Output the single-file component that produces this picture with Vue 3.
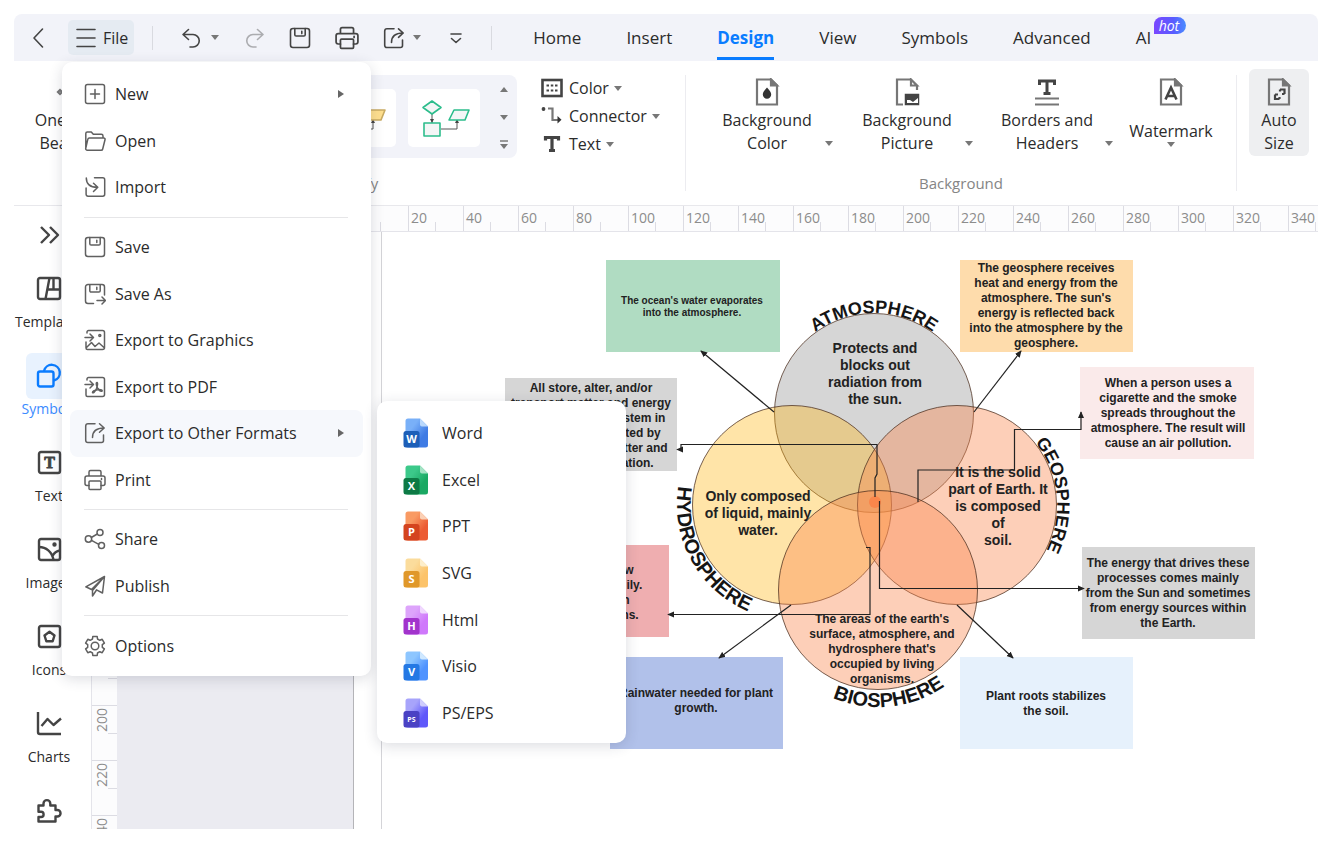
<script setup>
const polar = (cx, cy, r, deg) => {
  const a = (deg * Math.PI) / 180
  return `${(cx + r * Math.sin(a)).toFixed(1)} ${(cy - r * Math.cos(a)).toFixed(1)}`
}

const gearPath = () => {
  const pts = []
  for (let i = 0; i < 6; i++) {
    const a = i * 60
    pts.push(polar(11, 11, 7.4, a - 20), polar(11, 11, 9.8, a - 13), polar(11, 11, 9.8, a + 13), polar(11, 11, 7.4, a + 20))
  }
  return 'M' + pts.join('L') + 'Z'
}

const floppy = '<rect x="1.5" y="1.5" width="19" height="19" rx="2.5"/><path d="M5.8 1.5v6.2a1.3 1.3 0 0 0 1.3 1.3h7.8a1.3 1.3 0 0 0 1.3-1.3V1.5M12.8 4.2v2.4"/>'
const printer = '<path d="M5 7V3a1.5 1.5 0 0 1 1.500-1.500h9a1.500 1.500 0 0 1 1.500 1.500v4M5 16.500H3A2 2 0 0 1 1 14.500V9a2 2 0 0 1 2-2h16a2 2 0 0 1 2 2v5.500a2 2 0 0 1-2 2h-2M17.500 9.500v1"/><rect x="5" y="12" width="12" height="8.500" rx="1"/>'
const shareOut = '<path d="M11 1.800H4A2.300 2.300 0 0 0 1.700 4v14.200A2.300 2.300 0 0 0 4 20.500h13.500a2 2 0 0 0 2-2V13M8.500 15.500c0-6 4-9.500 11.500-9.500M15.500 1.800 20.200 6l-4.700 4.300"/>'

const icons = {
  back: '<path d="M14.500 2 6 11l8.500 9"/>',
  burger: '<path d="M2 2.500h18M2 11h18M2 19.500h18"/>',
  undo: '<path d="M7.500 2.500 2 7.500l5.500 5M2.500 7.500H12a6 6 0 0 1 0 12.500H9"/>',
  redo: '<path d="M14.500 2.500 20 7.500l-5.500 5M19.500 7.500H10A6 6 0 0 0 10 20h3"/>',
  floppy,
  printer,
  shareOut,
  more: '<path d="M6 7h10M6.500 11.500l4.500 4 4.500-4"/>',
  newDoc: '<rect x="1.500" y="1.500" width="19" height="19" rx="2"/><path d="M11 6.500v9M6.500 11h9"/>',
  folder: '<path d="M1.800 18V3.500A1.500 1.500 0 0 1 3.300 2h4l2 2.300h8a1.700 1.700 0 0 1 1.700 1.700v2M1.800 18 3.800 9.300A1.600 1.600 0 0 1 5.400 8h14.300a1.300 1.300 0 0 1 1.300 1.700l-2.300 9.300a1.600 1.600 0 0 1-1.600 1.300H3.500A1.700 1.700 0 0 1 1.800 18Z"/>',
  importIn: '<path d="M10.500 1.800h8.300a1.900 1.900 0 0 1 1.900 1.900v14.600a1.900 1.900 0 0 1-1.900 1.900H4a1.900 1.900 0 0 1-1.900-1.900V12M2.300 2c0 5.500 3.500 9.300 11 9.300M9.500 7.300l4.300 4-4.300 4.200"/>',
  saveAs: '<path d="M9.500 20.500H4A2.500 2.500 0 0 1 1.500 18V4A2.500 2.500 0 0 1 4 1.500h14A2.500 2.500 0 0 1 20.500 4v8M5.800 1.500v6.200A1.300 1.300 0 0 0 7.100 9h7.800a1.300 1.300 0 0 0 1.300-1.300V1.500M12.800 4.200v2.400M13 17.500h8M18 14l3.500 3.500L18 21"/>',
  graphics: '<path d="M3 4V3a1.500 1.500 0 0 1 1.500-1.500h14A2 2 0 0 1 20.500 3.500v15a2 2 0 0 1-2 2h-15a1.500 1.500 0 0 1-1.500-1.500v-6M1 8.500h8M6 5l3.500 3.500L6 12M2 19l5.500-5.500 3.500 4 4-3.500 5.500 5"/><circle cx="15.800" cy="6.500" r="1"/>',
  pdf: '<path d="M3 4V3a1.500 1.500 0 0 1 1.500-1.500h14A2 2 0 0 1 20.500 3.500v15a2 2 0 0 1-2 2h-15a1.500 1.500 0 0 1-1.500-1.500v-6M1 8.500h8M6 5l3.500 3.500L6 12M13 6.500c-1 0-1 2 .3 5 1 2.200 3 4 4.500 3.800 1.400-.8-.8-2-4-1.600-3 .4-5.500 1.500-5.300 2.800.8 1.200 2.800-1.200 4-4 1-2.500 1.500-6 .5-6Z"/>',
  share: '<circle cx="4.500" cy="11" r="3.200"/><circle cx="16" cy="4.500" r="3"/><circle cx="17.500" cy="17.500" r="3"/><path d="m7.300 9.500 6-3.500M7.500 12.300l7.300 4"/>',
  publish: '<path d="M20.500 1.500 1.800 11.800l5.700 2.700L20.500 1.500Zm0 0-2 16.500-6-3.200M20.500 1.500 8.500 15.500v5.500l4-6"/>',
  gear: `<path d="${gearPath()}"/><circle cx="11" cy="11" r="3.800"/>`,
}

const quickTools = [
  { name: 'Undo', icon: 'undo', caret: true },
  { name: 'Redo', icon: 'redo', disabled: true },
  { name: 'Save', icon: 'floppy' },
  { name: 'Print', icon: 'printer', wide: true },
  { name: 'Share', icon: 'shareOut', caret: true },
  { name: 'More', icon: 'more' },
]

const tabs = ['Home', 'Insert', 'Design', 'View', 'Symbols', 'Advanced', 'AI']

const fileMenu = [
  { label: 'New', icon: 'newDoc', sub: true },
  { label: 'Open', icon: 'folder' },
  { label: 'Import', icon: 'importIn' },
  null,
  { label: 'Save', icon: 'floppy' },
  { label: 'Save As', icon: 'saveAs' },
  { label: 'Export to Graphics', icon: 'graphics' },
  { label: 'Export to PDF', icon: 'pdf' },
  { label: 'Export to Other Formats', icon: 'shareOut', sub: true, open: true },
  { label: 'Print', icon: 'printer' },
  null,
  { label: 'Share', icon: 'share' },
  { label: 'Publish', icon: 'publish' },
  null,
  { label: 'Options', icon: 'gear' },
]

const formats = [
  { label: 'Word', mark: 'W', from: '#79b0f8', to: '#3f7be4', fold: '#b9d8fc', badge: '#1d5fb8' },
  { label: 'Excel', mark: 'X', from: '#3cc98a', to: '#1aa863', fold: '#a5e3c5', badge: '#0d7a45' },
  { label: 'PPT', mark: 'P', from: '#f99a63', to: '#ec5b33', fold: '#fbd0b5', badge: '#d4441f' },
  { label: 'SVG', mark: 'S', from: '#fbdc9c', to: '#fcc36a', fold: '#fdeecb', badge: '#e0982a' },
  { label: 'Html', mark: 'H', from: '#dda4fb', to: '#cf78fb', fold: '#f0d8fe', badge: '#a233cc' },
  { label: 'Visio', mark: 'V', from: '#8dc6ff', to: '#5093ff', fold: '#cfe8ff', badge: '#2478e4' },
  { label: 'PS/EPS', mark: 'PS', from: '#a7a4fb', to: '#5f58fa', fold: '#cfcdfd', badge: '#4a42c4' },
]

const sideItems = [
  { label: 'Templates', svg: '<rect x="2" y="2" width="22" height="21" rx="2"/><path d="M13.500 2 9.500 23M12 13.500h12M17.500 2v11.500"/>' },
  { label: 'Symbols', active: true, svg: '<rect x="2" y="8.500" width="15.500" height="15" rx="2"/><path d="M8 8a8 8 0 1 1 10 9.500"/>' },
  { label: 'Text', svg: '<rect x="3" y="2" width="21" height="21" rx="2"/><text x="13.500" y="18" text-anchor="middle" font-family="Liberation Serif, serif" font-weight="700" font-size="16" fill="#444" stroke="#444" stroke-width="0.800">T</text>' },
  { label: 'Images', svg: '<rect x="3" y="2" width="21" height="21" rx="2"/><path d="M3 10c7 0 13 4.500 14.500 13M24 13.500c-3.500.5-6 2.500-7.500 5.500"/><circle cx="18.500" cy="7.500" r="1" fill="#444"/>' },
  { label: 'Icons', svg: '<rect x="3" y="2" width="21" height="21" rx="2"/><path d="m13.500 7.800 5 3.700-1.900 5.800h-6.200l-1.900-5.800Z"/>' },
  { label: 'Charts', svg: '<path d="M2 1v20a2 2 0 0 0 2 2h21M5.500 15l6-7 6 6L25 7.500"/>' },
  { label: '', svg: '<path d="M2.500 23.500v-4.500H5a2.600 2.600 0 0 0 0-5.200H2.500V7.500h5V5.500a3.400 3.400 0 0 1 6.800 0v2h5.200V12h1.800a3 3 0 0 1 0 6.500h-1.800v5Z"/>' },
]

const page = '<path d="M4 1.500h14l6 6V26.500H4Z"/><path d="M18 1.500v6h6Z" fill="#767676"/>'
const bgTools = [
  { lines: ['Background', 'Color'], svg: page + '<path d="M14 9.500c3 3.500 4.200 5 4.200 7a4.200 4.200 0 0 1-8.400 0c0-2 1.200-3.500 4.200-7Z" fill="#333" stroke="none"/>' },
  { lines: ['Background', 'Picture'], svg: '<path d="M10 26.500H4v-25h14l6 6V12M18 1.500v6h6Z"/><rect x="13" y="17" width="12" height="9" stroke="#444" stroke-width="2.500"/><path d="m14 20 5 4 6-5v6H14Z" fill="#fff" stroke="none"/><path d="M13 17h12v3l-5 4-3-2h-4Z" fill="#444" stroke="none"/>' },
  { lines: ['Borders and', 'Headers'], svg: '<path d="M6.500 7V3h15v4M14 3v12.500M10.500 15.500h7" stroke="#444" stroke-width="3"/><path d="M2 20.500h24M2 26.500h24"/>' },
]
const watermark = page + '<path d="m8.500 21.500 5.500-12 5.500 12M10.500 18h7" stroke="#444" stroke-width="2.600"/>'
const autoSize = page + '<path d="M15 11.500h4.500V16M10 16.500V21h4.500M10 16.500h3M17 16h2.500M15 11.500v2M14.500 19v2" stroke="#444"/>'

const themeRows = [
  { label: 'Color', svg: '<rect x="1.500" y="2" width="19" height="16" stroke-width="2.600"/><path d="M5.500 7.500h2.500M9.800 7.500h2.500M14 7.500h2.500M5.500 12.500h2.500M9.800 12.500h2.500M14 12.500h2.500" stroke-width="2"/>' },
  { label: 'Connector', svg: '<circle cx="2.500" cy="3" r="1.300" fill="#444" stroke-width="1.200"/><path d="M7 2.500h4.500V14H17" stroke="#777"/><path d="M16.500 10v7.500l4-3.700Z" fill="#333" stroke="none"/>' },
  { label: 'Text', svg: '<path d="M4.500 6.500V3.500h13v3M11 3.500v13M8 16.500h6" stroke-width="3.200"/>' },
]

const hTicks = Array.from({ length: 18 }, (_, i) => i * 20)
const vTicks = Array.from({ length: 11 }, (_, i) => 40 + i * 20)

const boxes = [
  { x: 606, y: 260, w: 174, h: 92, fill: '#b0dcc2', cx: 692, ty: 304, lh: 12, size: 'sm', lines: ["The ocean's water evaporates", 'into the atmosphere.'] },
  { x: 505, y: 378, w: 172, h: 93, fill: '#d6d6d6', cx: 591, ty: 392, lh: 15, lines: ['All store, alter, and/or', 'transport matter and energy', 'within the Earth system in', 'ways that are created by', 'the recycling of matter and', 'of incoming radiation.'] },
  { x: 960, y: 260, w: 173, h: 92, fill: '#fedcac', cx: 1046, ty: 272, lh: 15, lines: ['The geosphere receives', 'heat and energy from the', "atmosphere. The sun's", 'energy is reflected back', 'into the atmosphere by the', 'geosphere.'] },
  { x: 1080, y: 367, w: 174, h: 92, fill: '#faeaea', cx: 1168, ty: 387, lh: 15, lines: ['When a person uses a', 'cigarette and the smoke', 'spreads throughout the', 'atmosphere. The result will', 'cause an air pollution.'] },
  { x: 1082, y: 547, w: 173, h: 92, fill: '#d6d6d6', cx: 1168, ty: 567, lh: 15, lines: ['The energy that drives these', 'processes comes mainly', 'from the Sun and sometimes', 'from energy sources within', 'the Earth.'] },
  { x: 496, y: 545, w: 173, h: 92, fill: '#efaeb0', cx: 582, ty: 574, lh: 15, lines: ['Helps plants grow', 'and develop steadily.', 'Feeds the nation', 'types of organisms.'] },
  { x: 610, y: 657, w: 173, h: 92, fill: '#b1c1ea', cx: 696, ty: 697, lh: 15, lines: ['Rainwater needed for plant', 'growth.'] },
  { x: 960, y: 657, w: 173, h: 92, fill: '#e6f1fc', cx: 1046, ty: 700, lh: 15, lines: ['Plant roots stabilizes', 'the soil.'] },
]

const spheres = [
  { cx: 874, cy: 413, fill: '#d6d6d6', alpha: 1 },
  { cx: 792, cy: 505, fill: '#ffb40d', alpha: 0.36 },
  { cx: 957, cy: 505, fill: '#fb874d', alpha: 0.4 },
  { cx: 878, cy: 590, fill: '#fb874d', alpha: 0.4 },
]

const notes = [
  { cx: 875, ty: 353, lh: 17, size: 'lg', lines: ['Protects and', 'blocks out', 'radiation from', 'the sun.'] },
  { cx: 758, ty: 501, lh: 17, size: 'lg', lines: ['Only composed', 'of liquid, mainly', 'water.'] },
  { cx: 998, ty: 477, lh: 17, size: 'lg', lines: ['It is the solid', 'part of Earth. It', 'is composed', 'of', 'soil.'] },
  { cx: 882, ty: 623, lh: 15, lines: ["The areas of the earth's", 'surface, atmosphere, and', "hydrosphere that's", 'occupied by living', 'organisms.'] },
]

const arc = (cx, cy, r, mid, dir) =>
  `M${polar(cx, cy, r, mid - 60 * dir)}A${r} ${r} 0 0 ${dir > 0 ? 1 : 0} ${polar(cx, cy, r, mid + 60 * dir)}`

const rims = [
  { id: 'rim-atmosphere', label: 'ATMOSPHERE', d: arc(874, 413, 100, 0, 1) },
  { id: 'rim-geosphere', label: 'GEOSPHERE', d: arc(957, 505, 100, 84, 1) },
  { id: 'rim-hydrosphere', label: 'HYDROSPHERE', under: true, d: arc(792, 505, 115, 241, -1) },
  { id: 'rim-biosphere', label: 'BIOSPHERE', under: true, d: arc(878, 590, 117, 174, -1) },
]

const links = [
  'M774 412 701 351',
  'M974 412 1021 351',
  'M875 497V478L877 474V444.500H681V449.500H677',
  'M918 502V470H1014.500V429.500H1081V412',
  'M879.500 501V588.500H1084',
  'M866 547.500H870V614.500H668',
  'M791 605 719 658',
  'M957 605 1013 658',
]
</script>

<template>
  <div class="app">
    <header class="topbar">
      <button class="bare" aria-label="Back"><svg class="ico" viewBox="0 0 22 22" v-html="icons.back" /></button>
      <button class="file">
        <svg class="burger" viewBox="0 0 22 22" v-html="icons.burger" />
        <span>File</span>
      </button>
      <i class="bar" />
      <div class="quick">
        <button
          v-for="t in quickTools"
          :key="t.name"
          class="bare"
          :class="{ faded: t.disabled }"
          :aria-label="t.name"
        >
          <svg class="ico" :class="{ wide: t.wide }" viewBox="0 0 22 22" v-html="icons[t.icon]" />
          <i v-if="t.caret" class="caret" />
        </button>
      </div>
      <i class="bar" />
      <nav class="tabs">
        <a v-for="t in tabs" :key="t" href="#" :class="{ on: t === 'Design' }">{{ t }}<em v-if="t === 'AI'" class="hot">hot</em></a>
      </nav>
    </header>

    <section class="ribbon">
      <div class="group beautify">
        <div class="row">
          <button class="big one-click">
            <svg class="big-ico" viewBox="0 0 28 28"><path d="M4 12l2 2-2 2-2-2ZM8 24 20 10l3 3L11 26Z" /></svg>
            <span>One-Click<br />Beautify</span>
          </button>
          <div class="gallery">
            <div v-for="n in 4" :key="n" class="card">
              <svg viewBox="0 0 72 58" :class="n === 4 ? 'green' : 'yellow'">
                <path class="wire" d="M24 25v9M33 40h16V31" />
                <path class="tip" d="m22 30 2 4 2-4ZM47 34l2-4 2 4Z" />
                <path class="shape" d="m24 12 9 6.500-9 6.500-9-6.500ZM46 21h15l-4 10H41ZM16 34h16v13H16Z" />
              </svg>
            </div>
            <div class="scroller">
              <button class="bare" aria-label="Previous row"><i class="caret up" /></button>
              <button class="bare" aria-label="Next row"><i class="caret" /></button>
              <button class="bare" aria-label="All themes"><i class="caret lined" /></button>
            </div>
          </div>
          <div class="theme-list">
            <button v-for="r in themeRows" :key="r.label" class="theme">
              <svg viewBox="0 0 22 20" v-html="r.svg" />{{ r.label }}<i class="caret" />
            </button>
          </div>
        </div>
        <p class="caption">Beautify</p>
      </div>
      <i class="divider" />
      <div class="group background">
        <div class="row">
          <button v-for="b in bgTools" :key="b.lines[1]" class="big split">
            <svg class="big-ico" viewBox="0 0 28 28" v-html="b.svg" />
            <span>{{ b.lines[0] }}<br />{{ b.lines[1] }}</span>
            <i class="caret" />
          </button>
          <button class="big mark">
            <svg class="big-ico" viewBox="0 0 28 28" v-html="watermark" />
            <span>Watermark</span>
            <i class="caret" />
          </button>
        </div>
        <p class="caption">Background</p>
      </div>
      <i class="divider" />
      <div class="group">
        <button class="big auto">
          <svg class="big-ico" viewBox="0 0 28 28" v-html="autoSize" />
          <span>Auto<br />Size</span>
        </button>
      </div>
    </section>

    <main class="body">
      <aside class="side">
        <button class="bare expand" aria-label="Expand"><svg viewBox="0 0 26 26"><path d="m5 5 8 8-8 8M14 5l8 8-8 8" /></svg></button>
        <button v-for="s in sideItems" :key="s.label" class="side-item" :class="{ on: s.active }" :aria-label="s.label || 'Plugins'">
          <span class="tile"><svg viewBox="0 0 26 26" v-html="s.svg" /></span>
          <span v-if="s.label">{{ s.label }}</span>
        </button>
      </aside>
      <div class="work">
        <div class="h-ruler"><span v-for="t in hTicks" :key="t">{{ t }}</span></div>
        <div class="work-row">
          <div class="v-ruler"><span v-for="t in vTicks" :key="t"><b>{{ t }}</b></span></div>
          <div class="canvas">
            <div class="margin-strip" />
            <div class="guide" />
            <svg class="diagram">
              <defs>
                <marker id="head" viewBox="0 0 8 8" refX="7" refY="4" markerWidth="7" markerHeight="7" markerUnits="userSpaceOnUse" orient="auto">
                  <path d="M0 0.500 8 4 0 7.500Z" fill="#222" />
                </marker>
              </defs>
              <g transform="translate(-117 -232)">
                <rect v-for="(b, i) in boxes" :key="i" :x="b.x" :y="b.y" :width="b.w" :height="b.h" :fill="b.fill" />
                <circle
                  v-for="(s, i) in spheres"
                  :key="'s' + i"
                  class="sphere"
                  :cx="s.cx"
                  :cy="s.cy"
                  r="99.500"
                  :fill="s.fill"
                  :fill-opacity="s.alpha"
                />
                <circle cx="875" cy="502" r="6" fill="#fb7f45" fill-opacity="0.800" />
                <template v-for="r in rims" :key="r.id">
                  <path :id="r.id" :d="r.d" fill="none" />
                  <text class="rim" :class="{ under: r.under }"><textPath :href="'#' + r.id" startOffset="50%">{{ r.label }}</textPath></text>
                </template>
                <path v-for="(l, i) in links" :key="'l' + i" class="link" :d="l" marker-end="url(#head)" />
                <text v-for="(n, i) in [...boxes, ...notes]" :key="'t' + i" class="note" :class="n.size">
                  <tspan v-for="(line, k) in n.lines" :key="k" :x="n.cx" :y="n.ty + k * n.lh">{{ line }}</tspan>
                </text>
              </g>
            </svg>
          </div>
        </div>
      </div>
    </main>

    <div class="menu file-menu" role="menu">
      <template v-for="(m, i) in fileMenu" :key="i">
        <hr v-if="!m" />
        <button v-else class="item" :class="{ open: m.open }" role="menuitem">
          <svg class="ico" viewBox="0 0 22 22" v-html="icons[m.icon]" />
          <span>{{ m.label }}</span>
          <i v-if="m.sub" class="caret right" />
        </button>
      </template>
      <div class="menu sub-menu" role="menu">
        <button v-for="(f, i) in formats" :key="f.label" class="item" role="menuitem">
          <svg class="doc" viewBox="0 0 26 30">
            <defs>
              <linearGradient :id="'doc' + i" x1="0" y1="0" x2="1" y2="1">
                <stop offset="0.300" :stop-color="f.from" />
                <stop offset="0.700" :stop-color="f.to" />
              </linearGradient>
            </defs>
            <path d="M5 0.500H17L25 8.500V27a2.500 2.500 0 0 1-2.500 2.500H5A2.500 2.500 0 0 1 2.500 27V3A2.500 2.500 0 0 1 5 0.500Z" :fill="`url(#doc${i})`" />
            <path d="M17 0.500 25 8.500H19a2 2 0 0 1-2-2Z" :fill="f.fold" />
            <rect x="0.500" y="13" width="16" height="16.500" rx="2.500" :fill="f.badge" />
            <text x="8.500" :y="f.mark.length > 1 ? 24 : 25" :class="{ tiny: f.mark.length > 1 }">{{ f.mark }}</text>
          </svg>
          <span>{{ f.label }}</span>
        </button>
      </div>
    </div>
  </div>
</template>

<style>
body {
  background: #fff;
}
</style>

<style scoped>
.app {
  position: relative;
  display: flex;
  flex-direction: column;
  box-sizing: border-box;
  height: 100vh;
  padding: 14px 14px 15px;
  font-family: "Open Sans", "Noto Sans", sans-serif;
  font-size: 16px;
  color: #2b2b2b;
  overflow: hidden;
}
button {
  border: 0;
  padding: 0;
  background: none;
  font: inherit;
  color: inherit;
}
a {
  color: inherit;
  text-decoration: none;
}
svg {
  display: block;
  flex: none;
  fill: none;
}
.ico,
.burger {
  width: 22px;
  height: 22px;
  stroke: #444;
  stroke-width: 1.6;
  stroke-linecap: round;
  stroke-linejoin: round;
}
.ico.wide {
  width: 24px;
  height: 24px;
}
.bare {
  display: flex;
  align-items: center;
  gap: 8px;
}
.faded {
  opacity: 0.4;
}
.caret {
  flex: none;
  width: 0;
  height: 0;
  border: 4px solid transparent;
  border-top: 5px solid #777;
  border-bottom: 0;
}
.caret.up {
  border-top: 0;
  border-bottom: 5px solid #777;
}
.caret.right {
  border: 4px solid transparent;
  border-left: 6px solid #666;
  border-right: 0;
}
.caret.lined {
  position: relative;
}
.caret.lined::before {
  content: "";
  position: absolute;
  left: -4px;
  top: -9px;
  width: 8px;
  height: 2px;
  background: #999;
}

/* top bar */
.topbar {
  display: flex;
  align-items: center;
  flex: none;
  height: 47px;
  padding-left: 14px;
  background: #f2f3f9;
  border-radius: 8px 8px 0 0;
}
.file {
  display: flex;
  align-items: center;
  gap: 6px;
  box-sizing: border-box;
  height: 35px;
  margin: 0 18px;
  padding: 0 6px 0 7px;
  border-radius: 5px;
  background: #e5ebf2;
}
.bar {
  flex: none;
  width: 1px;
  height: 24px;
  background: #d9dae0;
}
.quick {
  display: flex;
  gap: 24px;
  margin: 0 24px 0 28px;
}
.tabs {
  display: flex;
  align-self: stretch;
  gap: 45px;
  margin-left: 41px;
  font-size: 17px;
}
.tabs a {
  position: relative;
  line-height: 48px;
}
.tabs .on {
  color: #0a7cff;
  font-weight: 700;
  box-shadow: inset 0 -1px #f2f3f9, inset 0 -4px #0a7cff;
}
.hot {
  position: absolute;
  left: 18px;
  top: 3px;
  padding: 0 7px 0 5px;
  border-radius: 8px 9px 9px 0;
  background: linear-gradient(90deg, #7a47ff, #5a5cff 60%, #4a8cff);
  color: #fff;
  font-size: 14px;
  line-height: 17px;
}

/* ribbon */
.ribbon {
  display: flex;
  flex: none;
  height: 144px;
  border-bottom: 1px solid #e8e8ec;
  overflow: hidden;
}
.group {
  display: flex;
  flex-direction: column;
  justify-content: space-between;
  flex: none;
  padding: 8px 0 12px;
}
.beautify {
  width: 671px;
}
.background {
  width: 550px;
}
.row {
  display: flex;
  align-items: flex-start;
}
.divider {
  flex: none;
  width: 1px;
  margin: 14px 0;
  background: #ececf0;
}
.caption {
  margin: 0;
  text-align: center;
  font-size: 15px;
  line-height: 20px;
  color: #858585;
}
.big {
  display: flex;
  flex-direction: column;
  align-items: center;
  gap: 3px 0;
  padding: 9px 0 1px;
  line-height: 23px;
}
.big-ico {
  width: 28px;
  height: 28px;
  stroke: #767676;
  stroke-width: 2.2;
}
.one-click {
  width: 112px;
}
.gallery {
  display: flex;
  flex: 1;
  justify-content: flex-end;
  gap: 12px;
  height: 58px;
  margin-top: 6px;
  padding: 14px 0 11px;
  border-radius: 8px;
  background: #f2f3f9;
  overflow: hidden;
}
.card {
  flex: none;
  width: 72px;
  border-radius: 5px;
  background: #fff;
}
.wire {
  stroke: #555;
}
.tip {
  fill: #444;
}
.shape {
  stroke-width: 1.6;
  stroke-linejoin: round;
}
.green .shape {
  stroke: #2dbd8c;
  fill: #f4f6f6;
}
.yellow .shape {
  stroke: #c9ab63;
  fill: #ffe08f;
}
.scroller {
  display: flex;
  flex-direction: column;
  justify-content: space-between;
  width: 25px;
  margin: -7px 0 -6px;
}
.scroller .bare {
  height: 14px;
  padding-left: 8px;
}
.theme-list {
  width: 144px;
  margin: 5px 0 0 24px;
}
.theme {
  display: flex;
  align-items: center;
  height: 28px;
}
.theme svg {
  width: 22px;
  height: 20px;
  margin-right: 6px;
  stroke: #444;
  stroke-width: 2.2;
}
.theme .caret {
  margin-left: 5px;
}
.background .row {
  padding-left: 11px;
}
.split {
  display: grid;
  grid-template-columns: 16px 108px 16px;
  justify-items: center;
}
.split .big-ico,
.split span {
  grid-column: 2;
}
.split .caret {
  grid-column: 3;
  grid-row: 2;
  align-self: end;
  margin-bottom: 9px;
}
.mark {
  width: 108px;
}
.mark span {
  padding-top: 11px;
  line-height: 22px;
}
.mark .caret {
  margin-top: -3px;
}
.auto {
  width: 60px;
  margin-left: 12px;
  border-radius: 6px;
  background: #eeeff1;
}

/* workspace */
.body {
  display: flex;
  flex: 1;
  min-height: 0;
}
.side {
  display: flex;
  flex-direction: column;
  align-items: center;
  flex: none;
  width: 70px;
  margin-right: 7px;
  overflow: hidden;
}
.side svg {
  width: 26px;
  height: 26px;
  stroke: #444;
  stroke-width: 2.4;
  stroke-linejoin: round;
}
.expand {
  flex: none;
  margin: 16px 0 18px;
}
.side-item {
  display: flex;
  flex-direction: column;
  align-items: center;
  flex: none;
  height: 87px;
  font-size: 14px;
  line-height: 20px;
}
.tile {
  display: grid;
  place-items: center;
  width: 46px;
  height: 46px;
  border-radius: 6px;
}
.on .tile {
  background: #e8f2fe;
}
.side .on svg {
  stroke: #0a7cff;
}
.side .on {
  color: #3b8bff;
}
.work {
  display: flex;
  flex-direction: column;
  flex: 1;
  min-width: 0;
  border-left: 1px solid #e4e4ea;
}
.h-ruler {
  display: flex;
  flex: none;
  height: 25px;
  padding-left: 261px;
  border-bottom: 1px solid #e4e4ea;
  background: #fcfcfd;
  overflow: hidden;
}
.h-ruler span {
  position: relative;
  flex: none;
  box-sizing: border-box;
  width: 55px;
  padding-left: 2px;
  border-left: 1px solid #dcdce3;
  font-size: 14px;
  line-height: 23px;
  color: #8c8c8c;
}
.h-ruler span::after {
  content: "";
  position: absolute;
  left: 26px;
  bottom: 0;
  height: 9px;
  border-left: 1px solid #dcdce3;
}
.work-row {
  display: flex;
  flex: 1;
  min-height: 0;
}
.v-ruler {
  flex: none;
  width: 25px;
  padding-top: 33px;
  background: #fcfcfd;
  overflow: hidden;
}
.v-ruler span {
  position: relative;
  display: block;
  box-sizing: border-box;
  height: 55px;
  padding-top: 2px;
  border-top: 1px solid #dcdce3;
  font-size: 14px;
  color: #8c8c8c;
}
.v-ruler b {
  display: block;
  width: 20px;
  line-height: 20px;
  font-weight: 400;
  writing-mode: vertical-rl;
  transform: rotate(180deg);
}
.v-ruler span::after {
  content: "";
  position: absolute;
  top: 27px;
  right: 0;
  width: 9px;
  border-top: 1px solid #dcdce3;
}
.canvas {
  position: relative;
  display: flex;
  flex: 1;
  min-width: 0;
  background: #fff;
  overflow: hidden;
}
.margin-strip {
  flex: none;
  width: 236px;
  border-right: 1px solid #b4b4b8;
  background: #ebebf1;
}
.guide {
  flex: none;
  width: 27px;
  border-right: 1px solid #d4d4d8;
}
.diagram {
  position: absolute;
  inset: 0;
  width: 100%;
  height: 100%;
}
.sphere {
  stroke: #4a2c1c;
  stroke-opacity: 0.75;
}
.link {
  stroke: #222;
  stroke-width: 1.2;
}
.note,
.rim {
  font-family: "Liberation Sans", Arial, sans-serif;
  font-weight: 700;
  font-size: 12px;
  text-anchor: middle;
  fill: #222;
}
.note.sm {
  font-size: 10px;
}
.note.lg {
  font-size: 14px;
}
.rim {
  font-size: 18px;
  fill: #151515;
}
.rim.under {
  font-size: 20px;
}

/* menus */
.menu {
  position: absolute;
  display: flex;
  flex-direction: column;
  box-sizing: border-box;
  padding: 9px 8px 7px;
  border-radius: 10px;
  background: #fff;
  box-shadow: 0 3px 14px rgba(40, 45, 70, 0.16);
}
.file-menu {
  left: 62px;
  top: 62px;
  width: 309px;
  min-height: 614px;
}
.sub-menu {
  left: 315px;
  top: 339px;
  width: 249px;
  min-height: 342px;
}
.item {
  display: flex;
  align-items: center;
  flex: 1 1 46px;
  gap: 9px;
  padding: 0 19px 0 14px;
  border-radius: 8px;
  text-align: left;
}
.item span {
  flex: 1;
}
.item .ico {
  stroke: #606060;
  stroke-width: 1.5;
}
.item.open {
  background: #f6f8fc;
}
.file-menu hr {
  flex: none;
  width: 264px;
  height: 1px;
  margin: 6px 14px;
  border: 0;
  background: #e6e6e8;
}
.sub-menu .item {
  gap: 13px;
  padding-left: 18px;
}
.doc {
  width: 26px;
  height: 30px;
}
.doc text {
  font: 700 11px "Open Sans", sans-serif;
  text-anchor: middle;
  fill: #fff;
}
.doc .tiny {
  font-size: 7px;
}
</style>
